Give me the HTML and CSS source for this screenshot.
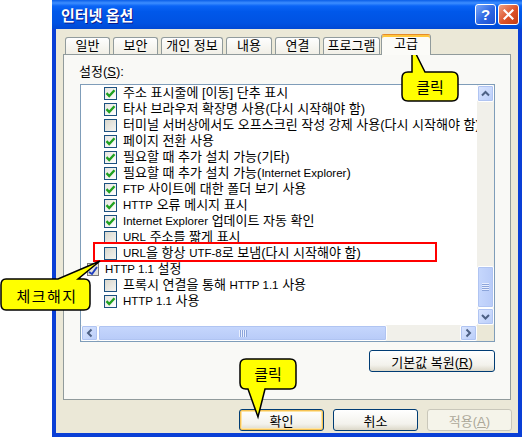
FILE: index.html
```html
<!DOCTYPE html>
<html>
<head>
  <meta charset="utf-8">
  <title>인터넷 옵션</title>
  <link rel="stylesheet" href="styles.css">
</head>
<body>
  <div class="window">
    <div class="titlebar">
      <span class="title">인터넷 옵션</span>
      <div class="title-buttons">
        <span class="tbtn help">?</span>
        <span class="tbtn close">
          <svg width="11" height="11" viewBox="0 0 11 11"><path d="M1.5 1.5 L9.5 9.5 M9.5 1.5 L1.5 9.5" stroke="#fff" stroke-width="2.2" stroke-linecap="square"/></svg>
        </span>
      </div>
    </div>

    <div class="frame">
      <div class="tabs">
        <span class="tab w45">일반</span>
        <span class="tab w45">보안</span>
        <span class="tab w62">개인 정보</span>
        <span class="tab w46">내용</span>
        <span class="tab w45">연결</span>
        <span class="tab w57">프로그램</span>
        <span class="tab active">고급</span>
      </div>

      <div class="panel">
        <div class="label">설정(<u>S</u>):</div>

        <div class="listbox">
          <div class="rows">
            <div class="row"><span class="cb on"><svg width="11" height="11" viewBox="0 0 11 11"><path d="M1.5 5.2 L4.2 8 L9.5 2.3" fill="none" stroke="#21a121" stroke-width="2.4"/></svg></span><span>주소 표시줄에 [이동] 단추 표시</span></div>
            <div class="row"><span class="cb on"><svg width="11" height="11" viewBox="0 0 11 11"><path d="M1.5 5.2 L4.2 8 L9.5 2.3" fill="none" stroke="#21a121" stroke-width="2.4"/></svg></span><span>타사 브라우저 확장명 사용(다시 시작해야 함)</span></div>
            <div class="row"><span class="cb"></span><span>터미널 서버상에서도 오프스크린 작성 강제 사용(다시 시작해야 함)</span></div>
            <div class="row"><span class="cb on"><svg width="11" height="11" viewBox="0 0 11 11"><path d="M1.5 5.2 L4.2 8 L9.5 2.3" fill="none" stroke="#21a121" stroke-width="2.4"/></svg></span><span>페이지 전환 사용</span></div>
            <div class="row"><span class="cb on"><svg width="11" height="11" viewBox="0 0 11 11"><path d="M1.5 5.2 L4.2 8 L9.5 2.3" fill="none" stroke="#21a121" stroke-width="2.4"/></svg></span><span>필요할 때 추가 설치 가능(기타)</span></div>
            <div class="row"><span class="cb on"><svg width="11" height="11" viewBox="0 0 11 11"><path d="M1.5 5.2 L4.2 8 L9.5 2.3" fill="none" stroke="#21a121" stroke-width="2.4"/></svg></span><span>필요할 때 추가 설치 가능(<span class="en">Internet Explorer</span>)</span></div>
            <div class="row"><span class="cb on"><svg width="11" height="11" viewBox="0 0 11 11"><path d="M1.5 5.2 L4.2 8 L9.5 2.3" fill="none" stroke="#21a121" stroke-width="2.4"/></svg></span><span><span class="en">FTP</span> 사이트에 대한 폴더 보기 사용</span></div>
            <div class="row"><span class="cb on"><svg width="11" height="11" viewBox="0 0 11 11"><path d="M1.5 5.2 L4.2 8 L9.5 2.3" fill="none" stroke="#21a121" stroke-width="2.4"/></svg></span><span><span class="en">HTTP</span> 오류 메시지 표시</span></div>
            <div class="row"><span class="cb on"><svg width="11" height="11" viewBox="0 0 11 11"><path d="M1.5 5.2 L4.2 8 L9.5 2.3" fill="none" stroke="#21a121" stroke-width="2.4"/></svg></span><span><span class="en">Internet Explorer</span> 업데이트 자동 확인</span></div>
            <div class="row"><span class="cb"></span><span><span class="en">URL</span> 주소를 짧게 표시</span></div>
            <div class="row"><span class="cb"></span><span><span class="en">URL</span>을 항상 <span class="en">UTF-8</span>로 보냄(다시 시작해야 함)</span></div>
            <div class="row group">
              <svg class="group-icon" width="12" height="13" viewBox="0 0 12 13">
                <rect x="0.5" y="0.5" width="11" height="12" fill="#e4e2da" stroke="#7a7a7a"/>
                <path d="M2 9 L5 11 L10 4" fill="none" stroke="#1f3fbf" stroke-width="2"/>
              </svg>
              <span><span class="en">HTTP 1.1</span> 설정</span>
            </div>
            <div class="row"><span class="cb"></span><span>프록시 연결을 통해 <span class="en">HTTP 1.1</span> 사용</span></div>
            <div class="row"><span class="cb on"><svg width="11" height="11" viewBox="0 0 11 11"><path d="M1.5 5.2 L4.2 8 L9.5 2.3" fill="none" stroke="#21a121" stroke-width="2.4"/></svg></span><span><span class="en">HTTP 1.1</span> 사용</span></div>

            <div class="highlight"></div>
          </div>

          <div class="vscroll">
            <span class="sbtn"><svg width="15" height="15" viewBox="0 0 15 15"><path d="M4 9.5 L7.5 6 L11 9.5" fill="none" stroke="#4d6185" stroke-width="2"/></svg></span>
            <div class="vtrack"><span class="vthumb"></span></div>
            <span class="sbtn"><svg width="15" height="15" viewBox="0 0 15 15"><path d="M4 6 L7.5 9.5 L11 6" fill="none" stroke="#4d6185" stroke-width="2"/></svg></span>
          </div>

          <div class="hscroll">
            <span class="sbtn"><svg width="15" height="14" viewBox="0 0 15 14"><path d="M9.5 3.5 L6 7 L9.5 10.5" fill="none" stroke="#4d6185" stroke-width="2"/></svg></span>
            <div class="htrack"><span class="hthumb"></span></div>
            <span class="sbtn"><svg width="15" height="14" viewBox="0 0 15 14"><path d="M5.5 3.5 L9 7 L5.5 10.5" fill="none" stroke="#4d6185" stroke-width="2"/></svg></span>
          </div>

          <div class="corner"></div>
        </div>

        <div class="panel-actions">
          <button class="btn restore">기본값 복원(<u>R</u>)</button>
        </div>
      </div>

      <div class="dialog-buttons">
        <button class="btn default">확인</button>
        <button class="btn">취소</button>
        <button class="btn" disabled>적용(<u>A</u>)</button>
      </div>
    </div>
  </div>

  <svg class="callouts" width="524" height="437" viewBox="0 0 524 437">
    <path d="M408,72 H412 L412,46 L425,72 H452 Q458,72 458,78 V95 Q458,101 452,101 H408 Q402,101 402,95 V78 Q402,72 408,72 Z"/>
    <text x="430" y="93">클릭</text>

    <path d="M6,279 H58 L100,261 L78,279 H84 Q90,279 90,285 V304 Q90,310 84,310 H6 Q1,310 1,304 V285 Q1,279 6,279 Z"/>
    <text x="47" y="302" class="wide">체크해지</text>

    <path d="M246,359 H290 Q296,359 296,365 V383 Q296,389 290,389 H265 L258,417 L248,389 H246 Q240,389 240,383 V365 Q240,359 246,359 Z"/>
    <text x="268" y="380">클릭</text>
  </svg>
</body>
</html>
```

FILE: styles.css
```css
* {
  box-sizing: border-box;
}
body {
  margin: 0;
  width: 524px;
  height: 437px;
  overflow: hidden;
  position: relative;
  background-color: #fff;
  font-family: "Liberation Sans", "Noto Sans CJK KR", sans-serif;
  font-size: 13px;
  color: #000;
}

.window {
  margin-left: 52px;
  width: 470px;
  height: 437px;
  display: flex;
  flex-direction: column;
}

/* title bar */
.titlebar {
  height: 29px;
  flex: none;
  display: flex;
  align-items: center;
  justify-content: space-between;
  padding: 0 3px 0 9px;
  background: linear-gradient(#0a5ee8, #3d8eff 3px, #0a64f6 6px, #0058ea 40%, #0052e2 80%, #0048d4);
}
.title {
  color: #fff;
  font-family: "Noto Sans CJK KR", sans-serif;
  font-size: 15px;
  font-weight: bold;
  text-shadow: 1px 1px #0d1a8c;
}
.title-buttons {
  display: flex;
  gap: 2px;
}
.tbtn {
  width: 21px;
  height: 21px;
  border: 1px solid #fff;
  border-radius: 3px;
  display: flex;
  align-items: center;
  justify-content: center;
}
.help {
  background: linear-gradient(135deg, #7aa6f8, #2c66e2 55%, #1d4fd0);
  color: #fff;
  font-size: 15px;
  font-weight: bold;
  font-family: "Liberation Sans", sans-serif;
}
.close {
  background: linear-gradient(135deg, #f0a184, #dc5128 55%, #c23c14);
}

/* window frame */
.frame {
  flex: 1;
  border: 4px solid #0a3fd6;
  border-top: none;
  background-color: #ebe8d7;
  padding: 5px 6px 0 7px;
}

/* tabs */
.tabs {
  display: flex;
  align-items: flex-end;
  height: 21px;
  gap: 3px;
  padding-left: 2px;
  position: relative;
  z-index: 1;
}
.tab {
  height: 17px;
  margin-bottom: 1px;
  border: 1px solid #919b9c;
  border-bottom: none;
  border-radius: 3px 3px 0 0;
  background: linear-gradient(#fefefe, #f1efe6);
  text-align: center;
  line-height: 15px;
}
.w45 { width: 45px; }
.w46 { width: 46px; }
.w57 { width: 57px; }
.w62 { width: 62px; }
.tab.active {
  width: 50px;
  height: 21px;
  margin: 0 0 0 -2px;
  border-top: 1px solid #e68b2c;
  box-shadow: inset 0 2px #ffc73c;
  background: #fbfbf8;
  line-height: 18px;
}

/* tab page */
.panel {
  width: 448px;
  height: 346px;
  margin-top: -1px;
  border: 1px solid #919b9c;
  background-color: #f9f9f6;
  padding: 9px 15px 0 16px;
}
.label {
  height: 16px;
  line-height: 16px;
  margin: 0 0 4px -1px;
}

.listbox {
  width: 415px;
  height: 258px;
  border: 1px solid #7f9db9;
  background-color: #fff;
  display: grid;
  grid-template-columns: 396px 17px;
  grid-template-rows: 240px 16px;
}
.rows {
  position: relative;
  overflow: hidden;
}
.row {
  height: 16px;
  display: flex;
  align-items: center;
  gap: 6px;
  padding-left: 23px;
  white-space: nowrap;
  line-height: 16px;
}
.row.group {
  padding-left: 6px;
}
.en {
  font-size: 11.5px;
}
.group-icon {
  flex: none;
}
.cb {
  flex: none;
  width: 13px;
  height: 13px;
  border: 1px solid #1c5180;
  background: linear-gradient(135deg, #d9d7cd, #f4f4f0);
  display: flex;
  align-items: center;
  justify-content: center;
}
.cb.on {
  background: linear-gradient(135deg, #e6e5df, #fff);
}
.highlight {
  position: absolute;
  left: 12px;
  top: 157px;
  width: 344px;
  height: 20px;
  border: 2px solid #f00;
}

/* scrollbars */
.sbtn {
  flex: none;
  width: 17px;
  height: 17px;
  border: 1px solid #fff;
  border-radius: 2px;
  background: linear-gradient(135deg, #dbe6fe, #b9cdfa);
  box-shadow: inset 0 0 0 1px #b0c4f2;
  display: flex;
  align-items: center;
  justify-content: center;
}
.hscroll .sbtn {
  height: 16px;
}
.vscroll {
  display: flex;
  flex-direction: column;
  background-color: #f1f0ea;
}
.vtrack {
  flex: 1;
  display: flex;
  flex-direction: column;
  justify-content: flex-end;
}
.vthumb {
  height: 42px;
  border: 1px solid #fff;
  border-radius: 2px;
  background:
    repeating-linear-gradient(#e9efff 0 1px, #8ca5db 1px 2px) 4px 16px / 7px 8px no-repeat,
    linear-gradient(90deg, #c6d7fd, #b8cbf8);
  box-shadow: inset 0 0 0 1px #b0c4f2;
}
.hscroll {
  display: flex;
  background-color: #f1f0ea;
}
.htrack {
  flex: 1;
  display: flex;
}
.hthumb {
  width: 289px;
  height: 16px;
  border: 1px solid #fff;
  border-radius: 2px;
  background:
    repeating-linear-gradient(90deg, #e9efff 0 1px, #8ca5db 1px 2px) 140px 4px / 8px 7px no-repeat,
    linear-gradient(#c6d7fd, #b8cbf8);
  box-shadow: inset 0 0 0 1px #b0c4f2;
}
.corner {
  background-color: #ebe8d7;
}

/* buttons */
.btn {
  width: 85px;
  height: 22px;
  padding: 0;
  border: 1px solid #003c74;
  border-radius: 3px;
  background: linear-gradient(#fff, #f3f2ec 70%, #dcd8c9);
  font-family: "Liberation Sans", "Noto Sans CJK KR", sans-serif;
  font-size: 13px;
  color: #000;
}
.btn.default {
  box-shadow: inset 0 0 0 1px #f5c255, inset 0 0 0 2px #fde5a5;
}
.btn:disabled {
  border-color: #c9c7ba;
  background: #f5f4ea;
  color: #aca899;
}
.panel-actions {
  display: flex;
  justify-content: flex-end;
  margin-top: 8px;
}
.btn.restore {
  width: 126px;
}
.dialog-buttons {
  display: flex;
  justify-content: flex-end;
  gap: 9px;
  margin-top: 9px;
}

/* callouts laid over the screenshot */
.callouts {
  position: absolute;
  top: 0;
  left: 0;
  pointer-events: none;
}
.callouts path {
  fill: #ffff00;
  stroke: #000;
  stroke-width: 1.5;
}
.callouts text {
  font-family: "Noto Sans CJK KR", sans-serif;
  font-size: 15px;
  text-anchor: middle;
  fill: #000;
}
.callouts text.wide {
  letter-spacing: 1.5px;
}
```
